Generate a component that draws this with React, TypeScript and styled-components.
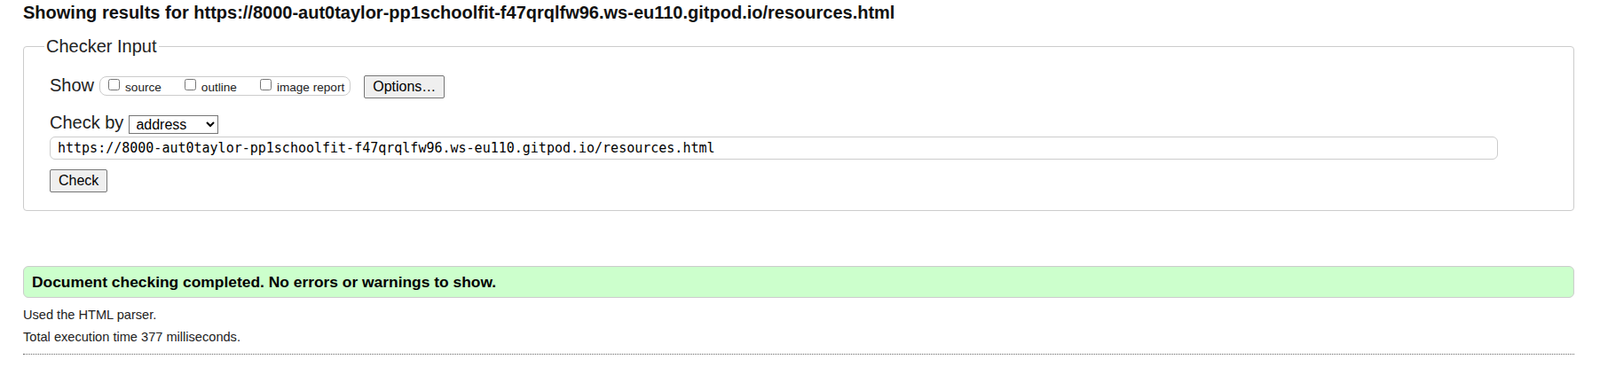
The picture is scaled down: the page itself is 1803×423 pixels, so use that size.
import styled, { createGlobalStyle } from "styled-components";

const CHECKED_URL =
  "https://8000-aut0taylor-pp1schoolfit-f47qrqlfw96.ws-eu110.gitpod.io/resources.html";

const GlobalStyle = createGlobalStyle`
  body {
    margin: 0;
    background: #fff;
    color: #000;
    font-family: "Liberation Sans", Arial, sans-serif;
  }
`;

const showOptions = ["source", "outline", "image report"];

export default function App() {
  return (
    <>
      <GlobalStyle />
      <Page>
        <Heading>Showing results for {CHECKED_URL}</Heading>

        <InputFieldset>
          <Legend>Checker Input</Legend>

          <ShowRow>
            <FieldLabel $raise={3}>Show</FieldLabel>
            <CheckGroup>
              {showOptions.map((name) => (
                <OptionLabel key={name}>
                  <Checkbox type="checkbox" />
                  <OptionText>{name}</OptionText>
                </OptionLabel>
              ))}
            </CheckGroup>
            <OptionsButton type="button">Options…</OptionsButton>
          </ShowRow>

          <CheckByRow>
            <FieldLabel $raise={1}>Check by</FieldLabel>
            <Select defaultValue="address">
              <option value="address">address</option>
              <option value="file">file upload</option>
              <option value="text">text input</option>
            </Select>
          </CheckByRow>

          <UrlInput type="url" defaultValue={CHECKED_URL} />
          <CheckButton type="submit">Check</CheckButton>
        </InputFieldset>

        <Success>Document checking completed. No errors or warnings to show.</Success>
        <Info $first>Used the HTML parser.</Info>
        <Info>Total execution time 377 milliseconds.</Info>
        <Divider />
      </Page>
    </>
  );
}

const Page = styled.div`
  padding: 3px 29px 24px 26px;
`;

const Heading = styled.h2`
  margin: 0;
  font-size: 20px;
  line-height: 23px;
  font-weight: bold;
  color: #111;
`;

const InputFieldset = styled.fieldset`
  margin: 15px 0 0;
  padding: 21px 29px 20px;
  min-width: 0;
  border: 1px solid #ccc;
  border-radius: 4px;
`;

const Legend = styled.legend`
  margin-left: -6px;
  padding: 0 2px;
  font-size: 20px;
  line-height: 23px;
  color: #222;
`;

const ShowRow = styled.div`
  display: flex;
  align-items: center;
  height: 26px;
`;

const CheckByRow = styled.div`
  display: flex;
  align-items: flex-end;
  margin-top: 16px;
`;

const FieldLabel = styled.span<{ $raise: number }>`
  margin: 0 6px ${(p) => p.$raise}px 0;
  font-size: 20px;
  line-height: 23px;
  color: #222;
`;

const CheckGroup = styled.span`
  display: inline-flex;
  align-items: center;
  gap: 26px;
  box-sizing: border-box;
  height: 22px;
  margin-bottom: 2px;
  padding: 0 6px 0 9px;
  border: 1px solid #ccc;
  border-radius: 8px;
`;

const OptionLabel = styled.label`
  display: flex;
  align-items: center;
  font-size: 13.6px;
  color: #222;
`;

const Checkbox = styled.input`
  width: 13px;
  height: 13px;
  margin: 0 6px 4px 0;
`;

const OptionText = styled.span`
  padding-top: 3px;
`;

const Button = styled.button`
  height: 26px;
  padding: 0 9px;
  font: 16px "Liberation Sans", Arial, sans-serif;
  color: #000;
  background: #efefef;
  border: 1px solid #767676;
  border-radius: 2px;
`;

const OptionsButton = styled(Button)`
  margin-left: 15px;
`;

const CheckButton = styled(Button)`
  display: block;
  margin-top: 11px;
`;

const Select = styled.select`
  box-sizing: border-box;
  width: 101px;
  height: 21px;
  padding: 0 0 0 3px;
  font: 16px "Liberation Sans", Arial, sans-serif;
  color: #000;
  background: #fff;
  border: 1px solid #767676;
  border-radius: 0;
`;

const UrlInput = styled.input`
  display: block;
  box-sizing: border-box;
  width: calc(100% - 56px);
  height: 26px;
  margin-top: 3px;
  padding: 0 8px;
  font: 15px "DejaVu Sans Mono", "Liberation Mono", monospace;
  color: #000;
  border: 1px solid #ccc;
  border-radius: 6px;
`;

const Success = styled.div`
  box-sizing: border-box;
  height: 36px;
  margin-top: 62px;
  padding: 0 9px;
  font-size: 17.4px;
  font-weight: bold;
  line-height: 34px;
  background: #ccffcc;
  border: 1px solid #ccc;
  border-radius: 6px;
`;

const Info = styled.p<{ $first?: boolean }>`
  margin: ${(p) => (p.$first ? "7px" : "0")} 0 0;
  font-size: 14.6px;
  line-height: 25px;
  color: #222;
`;

const Divider = styled.hr`
  margin: 6px 0 0;
  border: 0;
  border-top: 1px dotted #666;
`;
